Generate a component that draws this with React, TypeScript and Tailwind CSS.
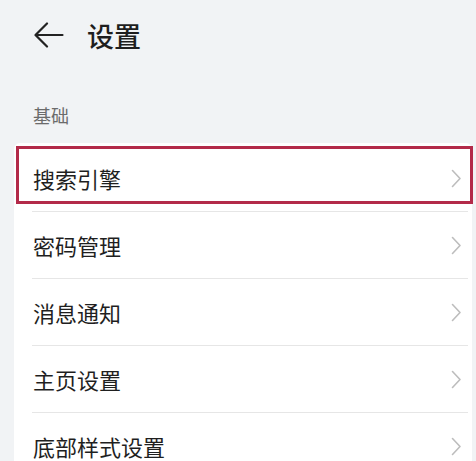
import React from "react";

const items = ["搜索引擎", "密码管理", "消息通知", "主页设置", "底部样式设置"];

function Chevron() {
  return (
    <svg width="11" height="19" viewBox="0 0 11 19" fill="none" className="shrink-0">
      <path d="M1.5 1.5 L9 9.5 L1.5 17.5" stroke="#bdbdbd" strokeWidth="1.6" strokeLinecap="round" strokeLinejoin="round" />
    </svg>
  );
}

export default function App() {
  return (
    <div
      className="relative w-[476px] h-[461px] overflow-hidden bg-[#f1f3f5]"
      style={{ fontFamily: '"Noto Sans CJK SC", "Noto Sans", sans-serif' }}
    >
      <div className="h-[70px] flex items-center pl-[34px]">
        <svg width="30" height="26" viewBox="0 0 30 26" fill="none">
          <path d="M28.5 13 H2 M13 1.5 L1.5 13 L13 24.5" stroke="#222" strokeWidth="2.2" strokeLinecap="round" strokeLinejoin="round" />
        </svg>
        <span className="ml-[23px] text-[27px] font-medium text-[#1e1e1e] leading-none">设置</span>
      </div>
      <div className="h-[73px] flex items-center pl-[33px] pt-[17px]">
        <span className="text-[18px] text-[#6b6b6b] leading-none">基础</span>
      </div>
      <div className="ml-[14px] mr-[4px] bg-white pt-[2px] rounded-t-[6px]">
        {items.map((t, i) => (
          <div key={t}>
            {i > 0 && <div className="ml-[18px] mr-[4px] h-px bg-[#e6e6e6]" />}
            <div className="h-[66px] flex items-center justify-between pl-[19px] pr-[10px]">
              <span className="text-[22px] text-[#1f1f1f] leading-none">{t}</span>
              <Chevron />
            </div>
          </div>
        ))}
      </div>
      <div className="absolute left-[16px] top-[146px] w-[457px] h-[58px] border-[3px] border-[#b32a49]" />
    </div>
  );
}
